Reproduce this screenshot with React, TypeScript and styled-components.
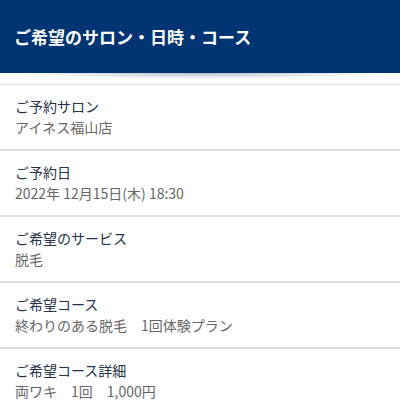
import * as React from "react";
import { styled, createGlobalStyle } from "styled-components";

const Global = createGlobalStyle`
  html, body {
    margin: 0;
    padding: 0;
    background: #fff;
  }
  body {
    font-family: "Noto Sans CJK JP", "Noto Sans", sans-serif;
  }
`;

const Header = styled.header`
  height: 73px;
  background: #003473;
  display: flex;
  align-items: center;
  padding: 0 14px;
  box-sizing: border-box;
`;

const Title = styled.h1`
  margin: 0;
  color: #fff;
  font-size: 17px;
  font-weight: 700;
  line-height: 1;
  letter-spacing: 0;
`;

const Shadow = styled.div`
  height: 11px;
  border-bottom: 1px solid #dcdcdc;
  background: radial-gradient(
    ellipse 48% 6px at 50% 0,
    rgba(0, 20, 60, 0.28),
    rgba(0, 20, 60, 0)
  );
`;

const List = styled.dl`
  margin: 0;
`;

const Item = styled.div`
  padding: 11px 15px 11px;
  border-bottom: 2px solid #dddddd;
`;

const Label = styled.dt`
  font-size: 14px;
  line-height: 21px;
  color: #24324a;
`;

const Value = styled.dd`
  margin: 0;
  font-size: 14px;
  line-height: 21px;
  color: #666666;
`;

const rows = [
  { label: "ご予約サロン", value: "アイネス福山店" },
  { label: "ご予約日", value: "2022年 12月15日(木) 18:30" },
  { label: "ご希望のサービス", value: "脱毛" },
  { label: "ご希望コース", value: "終わりのある脱毛　1回体験プラン" },
  { label: "ご希望コース詳細", value: "両ワキ　1回　1,000円" },
];

export default function App() {
  return (
    <>
      <Global />
      <Header>
        <Title>ご希望のサロン・日時・コース</Title>
      </Header>
      <Shadow />
      <List>
        {rows.map((r) => (
          <Item key={r.label}>
            <Label>{r.label}</Label>
            <Value>{r.value}</Value>
          </Item>
        ))}
      </List>
    </>
  );
}
